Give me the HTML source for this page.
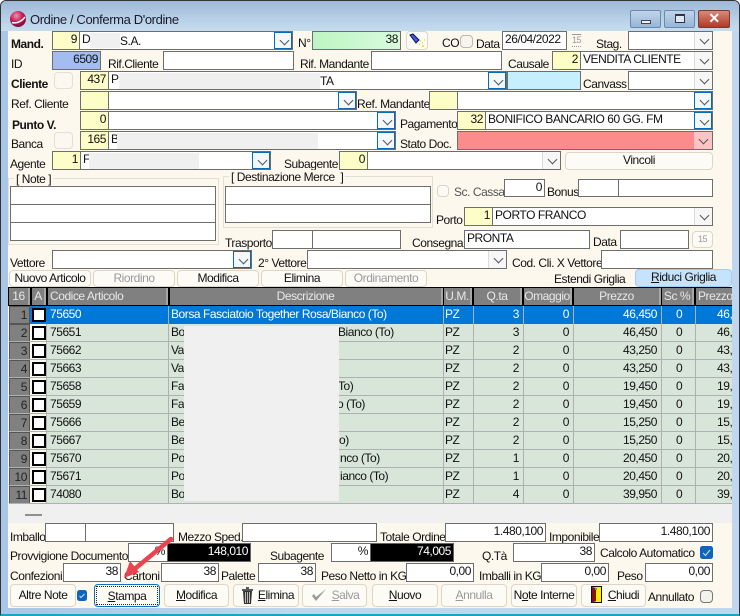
<!DOCTYPE html>
<html><head><meta charset="utf-8"><style>
html,body{margin:0;padding:0;width:740px;height:616px;overflow:hidden;background:#fff}
body{font:12px "Liberation Sans",sans-serif;color:#111;position:relative;letter-spacing:-.45px}
div,span{box-sizing:border-box}
#win{position:absolute;left:0;top:0;width:740px;height:616px;border-radius:6px 6px 0 0;background:linear-gradient(90deg,#a9c6e6,#bfd6ee 40%,#bfd8f0);border:1px solid #333;border-bottom:2px solid #14a6c4}
#tb{position:absolute;left:1px;top:1px;width:738px;height:30px;border-radius:5px 5px 0 0;background:linear-gradient(180deg,#9db8d6,#b8d0e8 60%,#c6dcef)}
#cl{position:absolute;left:8px;top:31px;width:724px;height:577px;background:#fdf8ee}
.t{position:absolute;white-space:nowrap;line-height:14px;height:14px}
.b{font-weight:bold}
.f{position:absolute;border:1px solid #6e6e6e;background:#fff;white-space:nowrap;line-height:15px;padding:0 2px;overflow:hidden}
.y{background:#fdfdc8;text-align:right}
.r{text-align:right}
.d{position:absolute;width:18px;background:#f7f7f7;border-left:1px solid #ddd}
.d:after{content:"";position:absolute;left:6px;top:4px;width:6px;height:6px;border-right:1px solid #555;border-bottom:1px solid #555;transform:rotate(45deg)}
.bl{background:#f3f8fd;border:1.5px solid #0c68b8}
.k{position:absolute;background:#000;color:#fff;text-align:right;padding-right:2px;line-height:15px;border:1px solid #666}
.n{position:absolute;border:1px solid #ddd6c8;border-radius:4px;background:#fdfbf6;text-align:center;line-height:15px;white-space:nowrap}
.dis{color:#9a9a9a}
.g{position:absolute;border:1px solid #e2dfd5}
.c{position:absolute;border:1px solid #bdb9b0;border-radius:4px;background:#f6f4ee}
.red{position:absolute;background:#f0f0f0}
#hd div{position:absolute;top:288px;height:17px;background:#808080;color:#e8e8e8;text-align:center;line-height:17px;white-space:nowrap;overflow:hidden;border-right:2px solid #a6a6a6}
.row{position:absolute;left:9px;width:723px;height:18px;background:#d8e6da;border-bottom:1px solid #acb2ad;line-height:17px;overflow:hidden}
.row.s{background:#0078d7;color:#fff;border-bottom:0}
.row span{position:absolute;top:0;white-space:nowrap}
.row i{position:absolute;top:0;height:18px;width:1px;background:#b0b0b0}
.row .h{left:0;top:0;width:21px;height:18px;background:#808080;color:#222;text-align:right;padding-right:2px;border:1px solid #555}
.row .x{left:23px;top:2px;width:14px;height:14px;background:#fff;border:2px solid #000}
.row .w{left:21px;top:0;width:17px;height:18px;background:#fdf8ee}
u{text-decoration:underline}
</style></head><body>
<div id="win"></div><div id="tb"></div>
<svg style="position:absolute;left:9px;top:10px" width="18" height="18" viewBox="0 0 18 18"><defs><radialGradient id="rg" cx=".4" cy=".3" r=".8"><stop offset="0" stop-color="#f090b0"/><stop offset=".5" stop-color="#c01850"/><stop offset="1" stop-color="#601030"/></radialGradient></defs><circle cx="9" cy="9" r="8" fill="url(#rg)"/><path d="M3 12.5C8 14 13 11 16 7" stroke="#fff" stroke-width="1.5" fill="none"/></svg>
<div class="t" style="left:30px;top:13px;font-size:13px;color:#1a1a2a;letter-spacing:-.38px">Ordine / Conferma D'ordine</div>
<div style="position:absolute;left:630px;top:10px;width:31px;height:18px;border:1px solid #6a8aac;border-radius:2px;background:linear-gradient(#c0d4ea,#98b6d6)"><div style="position:absolute;left:10px;top:9px;width:10px;height:4px;border:1px solid #445;background:#eee"></div></div>
<div style="position:absolute;left:664px;top:10px;width:31px;height:18px;border:1px solid #6a8aac;border-radius:2px;background:linear-gradient(#c0d4ea,#98b6d6)"><div style="position:absolute;left:10px;top:3px;width:10px;height:9px;border:1px solid #334;border-top-width:2px;background:#dce8f4"></div></div>
<div style="position:absolute;left:698px;top:10px;width:32px;height:18px;border:1px solid #7a3a30;border-radius:2px;background:linear-gradient(#d98a78,#b03a28);color:#fff;font:bold 14px/15px 'Liberation Sans',sans-serif;text-align:center">✕</div>
<div id="cl"></div>

<div class="t b" style="left:11px;top:37px">Mand.</div>
<div class="f y" style="left:52px;top:31px;width:28px;height:19px">9</div>
<div class="f" style="left:79px;top:31px;width:214px;height:19px">D<div class="d bl" style="right:0;top:0;height:17px"></div></div>
<div class="t" style="left:120px;top:34px">S.A.</div>
<div class="red" style="left:90px;top:33px;width:30px;height:15px"></div>
<div class="t" style="left:298px;top:36px">N°</div>
<div class="f r" style="left:312px;top:31px;width:89px;height:19px;background:linear-gradient(90deg,#bdf5c2,#d8fbdc)">38</div>
<div class="n" style="left:406px;top:31px;width:22px;height:19px"></div>
<svg style="position:absolute;left:409px;top:33px" width="17" height="15" viewBox="0 0 17 15"><path d="M1 2L4 1L10 7L7 10Z" fill="#4060d0" stroke="#101060"/><path d="M11 8h1M13 10h1M10 11h1M13 13h2M15 7h1" stroke="#e8e020" stroke-width="1.4"/></svg>
<div class="t" style="left:442px;top:36px">CO</div>
<div class="c" style="left:460px;top:35px;width:13px;height:13px"></div>
<div class="t" style="left:476px;top:37px">Data</div>
<div class="f" style="left:502px;top:31px;width:65px;height:19px">26/04/2022</div>
<div class="t dis" style="left:572px;top:34px;font-size:9px;border-top:1px solid #999;border-bottom:1px dotted #999;height:13px;line-height:11px">15</div>
<div class="t" style="left:596px;top:37px">Stag.</div>
<div class="f" style="left:628px;top:31px;width:85px;height:19px"><div class="d" style="right:0;top:0;height:17px"></div></div>

<div class="t" style="left:11px;top:57px">ID</div>
<div class="f r" style="left:52px;top:51px;width:49px;height:19px;background:#a4bdf0">6509</div>
<div class="t" style="left:108px;top:57px">Rif.Cliente</div>
<div class="f" style="left:163px;top:51px;width:131px;height:19px"></div>
<div class="t" style="left:300px;top:57px">Rif. Mandante</div>
<div class="f" style="left:371px;top:51px;width:131px;height:19px"></div>
<div class="t" style="left:508px;top:57px">Causale</div>
<div class="f y" style="left:552px;top:51px;width:29px;height:19px">2</div>
<div class="f" style="left:580px;top:51px;width:133px;height:19px">VENDITA CLIENTE<div class="d" style="right:0;top:0;height:17px"></div></div>

<div class="t b" style="left:11px;top:77px">Cliente</div>
<div class="c" style="left:54px;top:72px;width:19px;height:17px;border-color:#e2dfd5;background:#fbf8f1"></div>
<div class="f y" style="left:80px;top:71px;width:29px;height:19px">437</div>
<div class="f" style="left:108px;top:71px;width:399px;height:19px">P<div class="d bl" style="right:0;top:0;height:17px"></div></div>
<div class="red" style="left:119px;top:73px;width:201px;height:16px"></div>
<div class="t" style="left:320px;top:74px">TA</div>
<div class="f" style="left:507px;top:71px;width:74px;height:19px;background:#c5effe"></div>
<div class="t" style="left:583px;top:77px">Canvass</div>
<div class="f" style="left:628px;top:71px;width:85px;height:19px"><div class="d" style="right:0;top:0;height:17px"></div></div>

<div class="t" style="left:11px;top:97px">Ref. Cliente</div>
<div class="f y" style="left:80px;top:91px;width:29px;height:19px"></div>
<div class="f" style="left:108px;top:91px;width:249px;height:19px"><div class="d bl" style="right:0;top:0;height:17px"></div></div>
<div class="t" style="left:357px;top:97px">Ref. Mandante</div>
<div class="f y" style="left:429px;top:91px;width:29px;height:19px"></div>
<div class="f" style="left:457px;top:91px;width:256px;height:19px"><div class="d bl" style="right:0;top:0;height:17px"></div></div>

<div class="t b" style="left:12px;top:118px">Punto V.</div>
<div class="f y" style="left:80px;top:111px;width:29px;height:19px">0</div>
<div class="f" style="left:108px;top:111px;width:288px;height:19px"><div class="d bl" style="right:0;top:0;height:17px"></div></div>
<div class="t" style="left:400px;top:117px">Pagamento</div>
<div class="f y" style="left:457px;top:111px;width:29px;height:19px">32</div>
<div class="f" style="left:485px;top:111px;width:228px;height:19px">BONIFICO BANCARIO 60 GG. FM<div class="d bl" style="right:0;top:0;height:17px"></div></div>

<div class="t" style="left:11px;top:137px">Banca</div>
<div class="c" style="left:54px;top:132px;width:19px;height:17px;border-color:#e2dfd5;background:#fbf8f1"></div>
<div class="f y" style="left:80px;top:131px;width:29px;height:19px">165</div>
<div class="f" style="left:108px;top:131px;width:288px;height:19px">B<div class="d bl" style="right:0;top:0;height:17px"></div></div>
<div class="red" style="left:117px;top:133px;width:201px;height:16px"></div>
<div class="t" style="left:400px;top:137px">Stato Doc.</div>
<div class="f" style="left:457px;top:131px;width:256px;height:19px;background:#fc8b8b"><div class="d" style="right:0;top:0;height:17px;background:#fbc4c4;border:0"></div></div>

<div class="t" style="left:10px;top:157px">Agente</div>
<div class="f y" style="left:52px;top:151px;width:29px;height:19px">1</div>
<div class="f" style="left:80px;top:151px;width:191px;height:19px">F<div class="d bl" style="right:0;top:0;height:17px"></div></div>
<div class="red" style="left:89px;top:153px;width:110px;height:16px"></div>
<div class="t" style="left:284px;top:157px">Subagente</div>
<div class="f y" style="left:339px;top:151px;width:29px;height:19px">0</div>
<div class="f" style="left:367px;top:151px;width:194px;height:19px"><div class="d" style="right:0;top:0;height:17px"></div></div>
<div class="n" style="left:565px;top:152px;width:148px;height:18px">Vincoli</div>

<div class="g" style="left:8px;top:178px;width:211px;height:67px"></div>
<div class="t" style="left:14px;top:172px;background:#fdf8ee;padding:0 2px">[ Note ]</div>
<div class="f" style="left:10px;top:186px;width:206px;height:19px"></div>
<div class="f" style="left:10px;top:204px;width:206px;height:19px"></div>
<div class="f" style="left:10px;top:222px;width:206px;height:19px"></div>
<div class="g" style="left:223px;top:176px;width:210px;height:52px"></div>
<div class="t" style="left:229px;top:170px;background:#fdf8ee;padding:0 2px">[ Destinazione Merce&nbsp; ]</div>
<div class="f" style="left:225px;top:186px;width:206px;height:19px"></div>
<div class="f" style="left:225px;top:204px;width:206px;height:19px"></div>
<div class="t" style="left:225px;top:236px">Trasporto</div>
<div class="f" style="left:272px;top:230px;width:41px;height:19px"></div>
<div class="f" style="left:312px;top:230px;width:89px;height:19px"></div>

<div class="c" style="left:437px;top:185px;width:12px;height:12px;border-color:#d8d5cc;background:#fbf9f3"></div>
<div class="t dis" style="left:454px;top:185px;color:#555">Sc. Cassa</div>
<div class="f r" style="left:504px;top:179px;width:41px;height:18px">0</div>
<div class="t" style="left:547px;top:185px">Bonus</div>
<div class="f" style="left:578px;top:179px;width:41px;height:18px"></div>
<div class="f" style="left:618px;top:179px;width:95px;height:18px"></div>
<div class="t" style="left:436px;top:213px">Porto</div>
<div class="f y" style="left:464px;top:207px;width:29px;height:19px">1</div>
<div class="f" style="left:492px;top:207px;width:221px;height:19px">PORTO FRANCO<div class="d" style="right:0;top:0;height:17px"></div></div>
<div class="t" style="left:412px;top:236px">Consegna</div>
<div class="f" style="left:464px;top:230px;width:126px;height:19px">PRONTA</div>
<div class="t" style="left:593px;top:235px">Data</div>
<div class="f" style="left:620px;top:230px;width:69px;height:19px"></div>
<div class="n dis" style="left:692px;top:231px;width:21px;height:17px;font-size:9px">15</div>

<div class="t" style="left:10px;top:256px">Vettore</div>
<div class="f" style="left:52px;top:250px;width:200px;height:19px"><div class="d bl" style="right:0;top:0;height:17px"></div></div>
<div class="t" style="left:258px;top:256px">2° Vettore</div>
<div class="f" style="left:307px;top:250px;width:200px;height:19px"><div class="d" style="right:0;top:0;height:17px"></div></div>
<div class="t" style="left:512px;top:256px">Cod. Cli. X Vettore</div>
<div class="f" style="left:601px;top:250px;width:112px;height:19px"></div>

<div class="n" style="left:9px;top:270px;width:82px;height:17px">Nuovo Articolo</div>
<div class="n dis" style="left:93px;top:270px;width:82px;height:17px">Riordino</div>
<div class="n" style="left:177px;top:270px;width:82px;height:17px">Modifica</div>
<div class="n" style="left:261px;top:270px;width:82px;height:17px">Elimina</div>
<div class="n dis" style="left:345px;top:270px;width:82px;height:17px">Ordinamento</div>
<div class="t" style="left:554px;top:272px">Estendi Griglia</div>
<div class="n" style="left:635px;top:269px;width:97px;height:18px;background:#c5e3fb;border-color:#9fcdf4"><u>R</u>iduci Griglia</div>

<div style="position:absolute;left:8px;top:287px;width:724px;height:19px;background:#000"></div>
<div id="hd">
<div style="left:9px;width:21px">16</div>
<div style="left:32px;width:14px">A</div>
<div style="left:48px;width:120px;text-align:left;padding-left:2px">Codice Articolo</div>
<div style="left:170px;width:273px">Descrizione</div>
<div style="left:444px;width:28px">U.M.</div>
<div style="left:474px;width:48px">Q.ta</div>
<div style="left:524px;width:48px">Omaggio</div>
<div style="left:574px;width:87px">Prezzo</div>
<div style="left:662px;width:32px">Sc %</div>
<div style="left:696px;width:36px;text-align:left;padding-left:2px;border:0">Prezzo</div>
</div>

<div class="row s" style="top:306px"><span class="h">1</span><span class="x"></span><i style="left:159px"></i><i style="left:434px"></i><i style="left:464px"></i><i style="left:514px"></i><i style="left:564px"></i><i style="left:652px"></i><i style="left:686px"></i><span style="left:41px">75650</span><span style="left:162px">Borsa Fasciatoio Together Rosa/Bianco (To)</span><span style="left:436px">PZ</span><span style="right:213px">3</span><span style="right:163px">0</span><span style="right:75px">46,450</span><span style="left:667px">0</span><span style="left:708px">46,</span></div>
<div class="row" style="top:324px"><span class="w"></span><span class="h">2</span><span class="x"></span><i style="left:37px"></i><i style="left:159px"></i><i style="left:434px"></i><i style="left:464px"></i><i style="left:514px"></i><i style="left:564px"></i><i style="left:652px"></i><i style="left:686px"></i><span style="left:41px">75651</span><span style="left:162px">Bo</span><span style="left:329px">Bianco (To)</span><span style="left:436px">PZ</span><span style="right:213px">3</span><span style="right:163px">0</span><span style="right:75px">46,450</span><span style="left:667px">0</span><span style="left:708px">46,</span></div>
<div class="row" style="top:342px"><span class="w"></span><span class="h">3</span><span class="x"></span><i style="left:37px"></i><i style="left:159px"></i><i style="left:434px"></i><i style="left:464px"></i><i style="left:514px"></i><i style="left:564px"></i><i style="left:652px"></i><i style="left:686px"></i><span style="left:41px">75662</span><span style="left:162px">Va</span><span style="left:436px">PZ</span><span style="right:213px">2</span><span style="right:163px">0</span><span style="right:75px">43,250</span><span style="left:667px">0</span><span style="left:708px">43,</span></div>
<div class="row" style="top:360px"><span class="w"></span><span class="h">4</span><span class="x"></span><i style="left:37px"></i><i style="left:159px"></i><i style="left:434px"></i><i style="left:464px"></i><i style="left:514px"></i><i style="left:564px"></i><i style="left:652px"></i><i style="left:686px"></i><span style="left:41px">75663</span><span style="left:162px">Va</span><span style="left:436px">PZ</span><span style="right:213px">2</span><span style="right:163px">0</span><span style="right:75px">43,250</span><span style="left:667px">0</span><span style="left:708px">43,</span></div>
<div class="row" style="top:378px"><span class="w"></span><span class="h">5</span><span class="x"></span><i style="left:37px"></i><i style="left:159px"></i><i style="left:434px"></i><i style="left:464px"></i><i style="left:514px"></i><i style="left:564px"></i><i style="left:652px"></i><i style="left:686px"></i><span style="left:41px">75658</span><span style="left:162px">Fa</span><span style="left:329px">To)</span><span style="left:436px">PZ</span><span style="right:213px">2</span><span style="right:163px">0</span><span style="right:75px">19,450</span><span style="left:667px">0</span><span style="left:708px">19,</span></div>
<div class="row" style="top:396px"><span class="w"></span><span class="h">6</span><span class="x"></span><i style="left:37px"></i><i style="left:159px"></i><i style="left:434px"></i><i style="left:464px"></i><i style="left:514px"></i><i style="left:564px"></i><i style="left:652px"></i><i style="left:686px"></i><span style="left:41px">75659</span><span style="left:162px">Fa</span><span style="left:328px">o (To)</span><span style="left:436px">PZ</span><span style="right:213px">2</span><span style="right:163px">0</span><span style="right:75px">19,450</span><span style="left:667px">0</span><span style="left:708px">19,</span></div>
<div class="row" style="top:414px"><span class="w"></span><span class="h">7</span><span class="x"></span><i style="left:37px"></i><i style="left:159px"></i><i style="left:434px"></i><i style="left:464px"></i><i style="left:514px"></i><i style="left:564px"></i><i style="left:652px"></i><i style="left:686px"></i><span style="left:41px">75666</span><span style="left:162px">Be</span><span style="left:436px">PZ</span><span style="right:213px">2</span><span style="right:163px">0</span><span style="right:75px">15,250</span><span style="left:667px">0</span><span style="left:708px">15,</span></div>
<div class="row" style="top:432px"><span class="w"></span><span class="h">8</span><span class="x"></span><i style="left:37px"></i><i style="left:159px"></i><i style="left:434px"></i><i style="left:464px"></i><i style="left:514px"></i><i style="left:564px"></i><i style="left:652px"></i><i style="left:686px"></i><span style="left:41px">75667</span><span style="left:162px">Be</span><span style="left:330px">o)</span><span style="left:436px">PZ</span><span style="right:213px">2</span><span style="right:163px">0</span><span style="right:75px">15,250</span><span style="left:667px">0</span><span style="left:708px">15,</span></div>
<div class="row" style="top:450px"><span class="w"></span><span class="h">9</span><span class="x"></span><i style="left:37px"></i><i style="left:159px"></i><i style="left:434px"></i><i style="left:464px"></i><i style="left:514px"></i><i style="left:564px"></i><i style="left:652px"></i><i style="left:686px"></i><span style="left:41px">75670</span><span style="left:162px">Po</span><span style="left:331px">nco (To)</span><span style="left:436px">PZ</span><span style="right:213px">1</span><span style="right:163px">0</span><span style="right:75px">20,450</span><span style="left:667px">0</span><span style="left:708px">20,</span></div>
<div class="row" style="top:468px"><span class="w"></span><span class="h">10</span><span class="x"></span><i style="left:37px"></i><i style="left:159px"></i><i style="left:434px"></i><i style="left:464px"></i><i style="left:514px"></i><i style="left:564px"></i><i style="left:652px"></i><i style="left:686px"></i><span style="left:41px">75671</span><span style="left:162px">Po</span><span style="left:331px">ianco (To)</span><span style="left:436px">PZ</span><span style="right:213px">1</span><span style="right:163px">0</span><span style="right:75px">20,450</span><span style="left:667px">0</span><span style="left:708px">20,</span></div>
<div class="row" style="top:486px"><span class="w"></span><span class="h">11</span><span class="x"></span><i style="left:37px"></i><i style="left:159px"></i><i style="left:434px"></i><i style="left:464px"></i><i style="left:514px"></i><i style="left:564px"></i><i style="left:652px"></i><i style="left:686px"></i><span style="left:41px">74080</span><span style="left:162px">Bo</span><span style="left:436px">PZ</span><span style="right:213px">4</span><span style="right:163px">0</span><span style="right:75px">39,950</span><span style="left:667px">0</span><span style="left:708px">39,</span></div>
<div class="red" style="left:184px;top:326px;width:155px;height:175px"></div>

<div style="position:absolute;left:8px;top:504px;width:724px;height:19px;background:#f0f0f0"></div>
<div style="position:absolute;left:25px;top:514px;width:17px;height:2px;background:#909090"></div>

<div class="t" style="left:10px;top:530px">Imballo</div>
<div class="f" style="left:45px;top:523px;width:41px;height:19px"></div>
<div class="f" style="left:85px;top:523px;width:89px;height:19px"></div>
<div class="t" style="left:178px;top:530px">Mezzo Sped.</div>
<div class="f" style="left:242px;top:523px;width:135px;height:19px"></div>
<div class="t" style="left:380px;top:530px">Totale Ordine</div>
<div class="f r" style="left:445px;top:523px;width:101px;height:19px">1.480,100</div>
<div class="t" style="left:549px;top:530px">Imponibile</div>
<div class="f r" style="left:599px;top:523px;width:114px;height:19px">1.480,100</div>

<div class="t" style="left:10px;top:549px">Provvigione Documento</div>
<div class="f r" style="left:128px;top:543px;width:40px;height:19px">%</div>
<div class="k" style="left:167px;top:543px;width:84px;height:19px">148,010</div>
<div class="t" style="left:270px;top:549px">Subagente</div>
<div class="f r" style="left:331px;top:543px;width:40px;height:19px">%</div>
<div class="k" style="left:370px;top:543px;width:84px;height:19px">74,005</div>
<div class="t" style="left:482px;top:549px">Q.Tà</div>
<div class="f r" style="left:513px;top:543px;width:82px;height:19px">38</div>
<div class="t" style="left:600px;top:546px">Calcolo Automatico</div>
<svg style="position:absolute;left:700px;top:546px" width="13" height="13" viewBox="0 0 13 13"><rect width="13" height="13" rx="2.5" fill="#0f64c0"/><path d="M3 7l2.5 2.5L10 4" stroke="#cfe0f5" fill="none"/></svg>

<div class="t" style="left:10px;top:569px">Confezioni</div>
<div class="f r" style="left:63px;top:563px;width:58px;height:19px">38</div>
<div class="t" style="left:124px;top:569px">Cartoni</div>
<div class="f r" style="left:161px;top:563px;width:58px;height:19px">38</div>
<div class="t" style="left:221px;top:569px">Palette</div>
<div class="f r" style="left:258px;top:563px;width:58px;height:19px">38</div>
<div class="t" style="left:321px;top:569px">Peso Netto in KG</div>
<div class="f r" style="left:406px;top:563px;width:68px;height:19px">0,00</div>
<div class="t" style="left:479px;top:569px">Imballi in KG</div>
<div class="f r" style="left:541px;top:563px;width:68px;height:19px">0,00</div>
<div class="t" style="left:617px;top:569px">Peso</div>
<div class="f r" style="left:645px;top:563px;width:68px;height:19px">0,00</div>

<div class="n" style="left:10px;top:584px;width:66px;height:23px;line-height:21px">Altre Note</div>
<svg style="position:absolute;left:77px;top:590px" width="10" height="11" viewBox="0 0 10 11"><rect width="10" height="11" rx="2.5" fill="#0f64c0"/><path d="M2.5 6l1.5 1.5L7.5 4" stroke="#cfe0f5" fill="none"/></svg>
<div class="n" style="left:94px;top:584px;width:66px;height:23px;line-height:19px;border:1px solid #1070c0;padding:1px"><div style="border:1px dotted #222;height:19px"><u>S</u>tampa</div></div>
<div class="n" style="left:164px;top:584px;width:65px;height:23px;line-height:21px"><u>M</u>odifica</div>
<div class="n" style="left:233px;top:584px;width:66px;height:23px;line-height:21px;padding-left:20px"><u>E</u>limina</div>
<svg style="position:absolute;left:241px;top:587px" width="13" height="18" viewBox="0 0 13 18"><path d="M1 3h11M5 1h3" stroke="#222" stroke-width="1.5"/><path d="M2 4h9l-1 13H3Z" fill="#333"/><path d="M4.5 5v11M6.5 5v11M8.5 5v11" stroke="#bbb"/></svg>
<div class="n dis" style="left:302px;top:584px;width:65px;height:23px;line-height:21px;padding-left:22px"><u>S</u>alva</div>
<svg style="position:absolute;left:311px;top:588px" width="16" height="15" viewBox="0 0 16 15"><path d="M1 8l4 5L15 1 5 9 3 6Z" fill="#9a9a9a"/></svg>
<div class="n" style="left:372px;top:584px;width:66px;height:23px;line-height:21px"><u>N</u>uovo</div>
<div class="n dis" style="left:441px;top:584px;width:66px;height:23px;line-height:21px"><u>A</u>nnulla</div>
<div class="n" style="left:511px;top:584px;width:66px;height:23px;line-height:21px">N<u>o</u>te Interne</div>
<div class="n" style="left:581px;top:584px;width:65px;height:23px;line-height:21px;padding-left:20px"><u>C</u>hiudi</div>
<svg style="position:absolute;left:591px;top:586px" width="11" height="18" viewBox="0 0 11 18"><rect x=".5" y=".5" width="10" height="16" fill="#ffee00" stroke="#111"/><path d="M1 1l4 1v13l-4 2Z" fill="#8a1010"/><rect x="4" y="2" width="2" height="2" fill="#30a0d0"/></svg>
<div class="t" style="left:648px;top:590px">Annullato</div>
<div class="c" style="left:700px;top:590px;width:13px;height:13px;border-color:#777;background:#f4f2ec"></div>

<svg style="position:absolute;left:115px;top:530px" width="65" height="55" viewBox="0 0 65 55"><path d="M56 9L16 42" stroke="#ec4350" stroke-width="4.5" stroke-linecap="round"/><path d="M9 48L24 42L15 31Z" fill="#ec4350"/></svg>
</body></html>
